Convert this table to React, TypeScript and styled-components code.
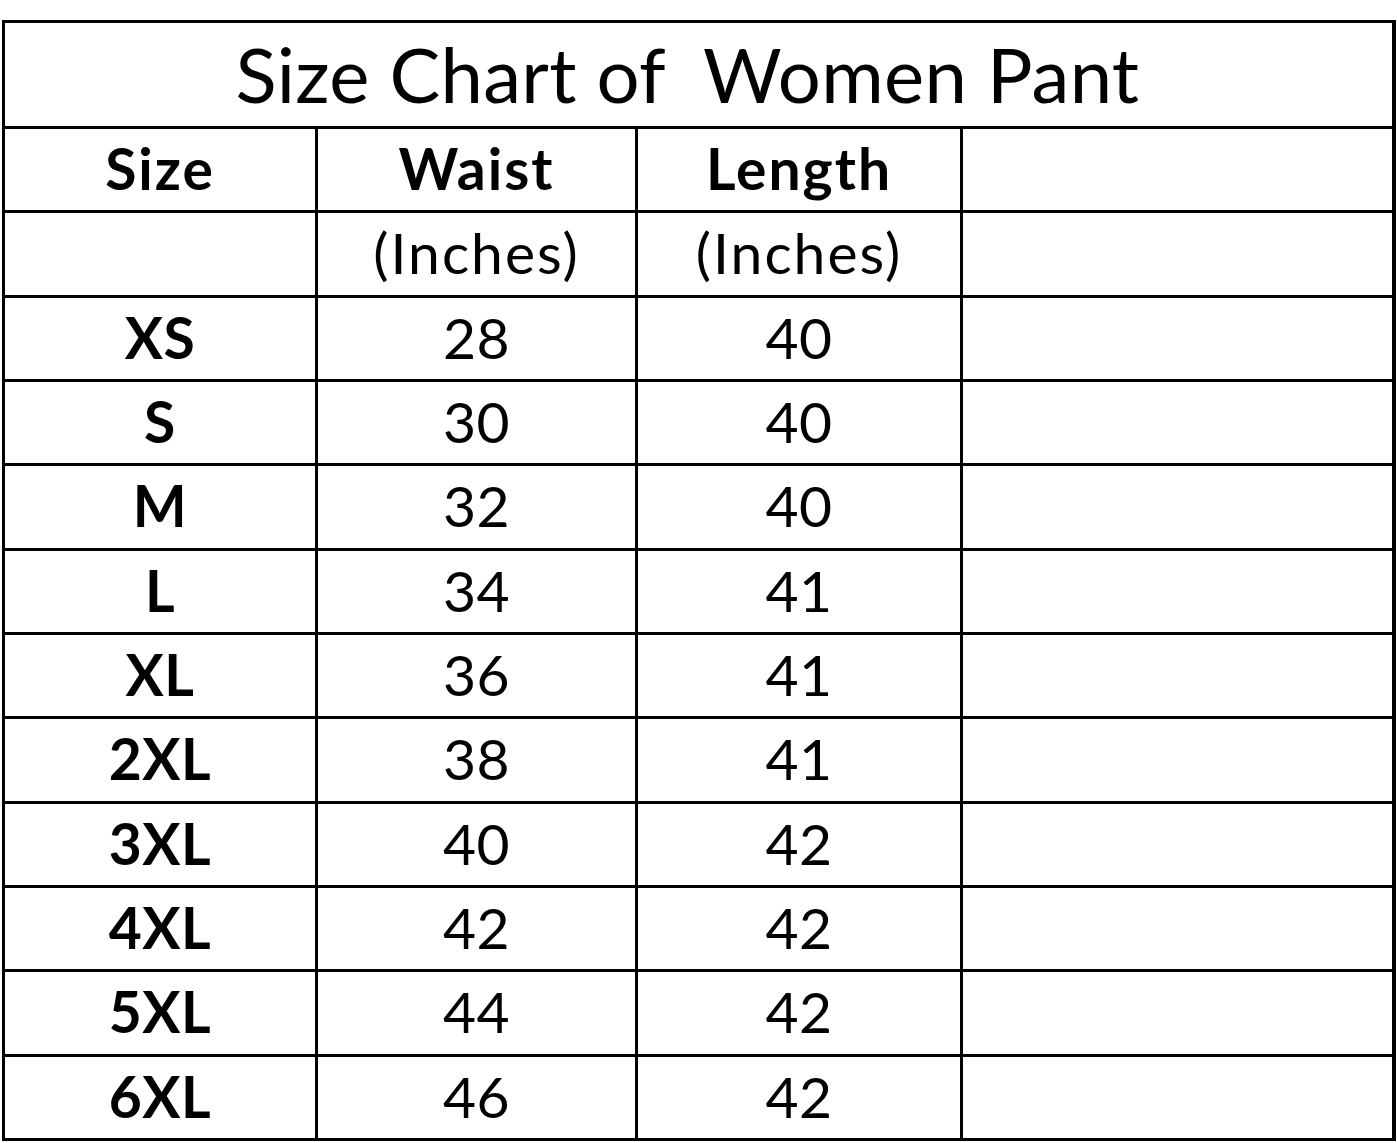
import React from "react";
import styled, { createGlobalStyle } from "styled-components";

const GlobalStyle = createGlobalStyle`
  html, body {
    margin: 0;
    padding: 0;
    background: #ffffff;
  }
  body {
    font-family: "Lato", "Open Sans", sans-serif;
    color: #000;
  }
`;

const Page = styled.div`
  padding: 20px 1px 0 2px;
`;

const Chart = styled.div`
  width: 1394px;
  height: 1121px;
  box-sizing: border-box;
  background: #000;
  padding: 3px 4px 3px 3px;
  display: grid;
  grid-template-columns: 310px 317px 322px 1fr;
  grid-template-rows: 103px repeat(12, 1fr);
  gap: 3px;
`;

const TitleCell = styled.div`
  grid-column: 1 / -1;
  background: #fff;
  display: flex;
  align-items: center;
  justify-content: center;
  font-size: 76px;
  font-weight: 400;
  letter-spacing: 0.3px;
  white-space: pre;
  padding-right: 22px;
  padding-bottom: 2px;
`;

const Cell = styled.div<{ $bold?: boolean; $wide?: boolean }>`
  background: #fff;
  display: flex;
  align-items: center;
  justify-content: center;
  font-size: 57px;
  font-weight: ${(p) => (p.$bold ? 700 : 400)};
  letter-spacing: ${(p) => (p.$wide ? "2px" : "0.5px")};
  line-height: 1;
  padding-bottom: 2px;
`;

const rows: [string, string, string][] = [
  ["XS", "28", "40"],
  ["S", "30", "40"],
  ["M", "32", "40"],
  ["L", "34", "41"],
  ["XL", "36", "41"],
  ["2XL", "38", "41"],
  ["3XL", "40", "42"],
  ["4XL", "42", "42"],
  ["5XL", "44", "42"],
  ["6XL", "46", "42"],
];

export default function App() {
  return (
    <Page>
      <GlobalStyle />
      <Chart>
        <TitleCell>{"Size Chart of  Women Pant"}</TitleCell>

        <Cell $bold $wide>Size</Cell>
        <Cell $bold $wide>Waist</Cell>
        <Cell $bold $wide>Length</Cell>
        <Cell />

        <Cell />
        <Cell $wide>(Inches)</Cell>
        <Cell $wide>(Inches)</Cell>
        <Cell />

        {rows.map(([size, waist, length]) => (
          <React.Fragment key={size}>
            <Cell $bold>{size}</Cell>
            <Cell>{waist}</Cell>
            <Cell>{length}</Cell>
            <Cell />
          </React.Fragment>
        ))}
      </Chart>
    </Page>
  );
}
